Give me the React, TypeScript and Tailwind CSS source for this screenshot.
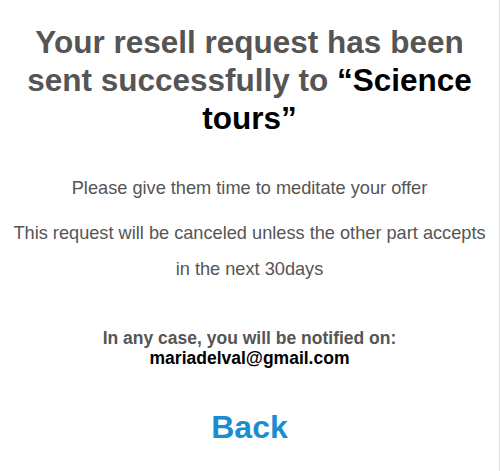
export default function App() {
  return (
    <div className="w-[500px] h-[471px] bg-white border-r border-[#dddddd] box-border overflow-hidden" style={{ fontFamily: '"Liberation Sans", Arial, sans-serif' }}>
      <div className="flex flex-col items-center text-center px-[10px] pt-[23px]">
        <h1 className="text-[31.5px] leading-[38px] font-bold text-[#555555] w-[460px]">
          Your resell request has been sent successfully to <span className="text-black">“Science tours”</span>
        </h1>
        <p className="mt-[41px] text-[18.2px] leading-[20px] text-[#555555]">Please give them time to meditate your offer</p>
        <p className="mt-[17px] text-[18.2px] leading-[36px] text-[#555555]">
          This request will be canceled unless the other part accepts
          <br />
          in the next 30days
        </p>
        <div className="mt-[41px] text-[17.5px] leading-[20px] font-bold">
          <div className="text-[#555555]">In any case, you will be notified on:</div>
          <div className="text-black">mariadelval@gmail.com</div>
        </div>
        <button className="mt-[41px] text-[32px] leading-[37px] font-bold text-[#1b8dcf]">Back</button>
      </div>
    </div>
  );
}
